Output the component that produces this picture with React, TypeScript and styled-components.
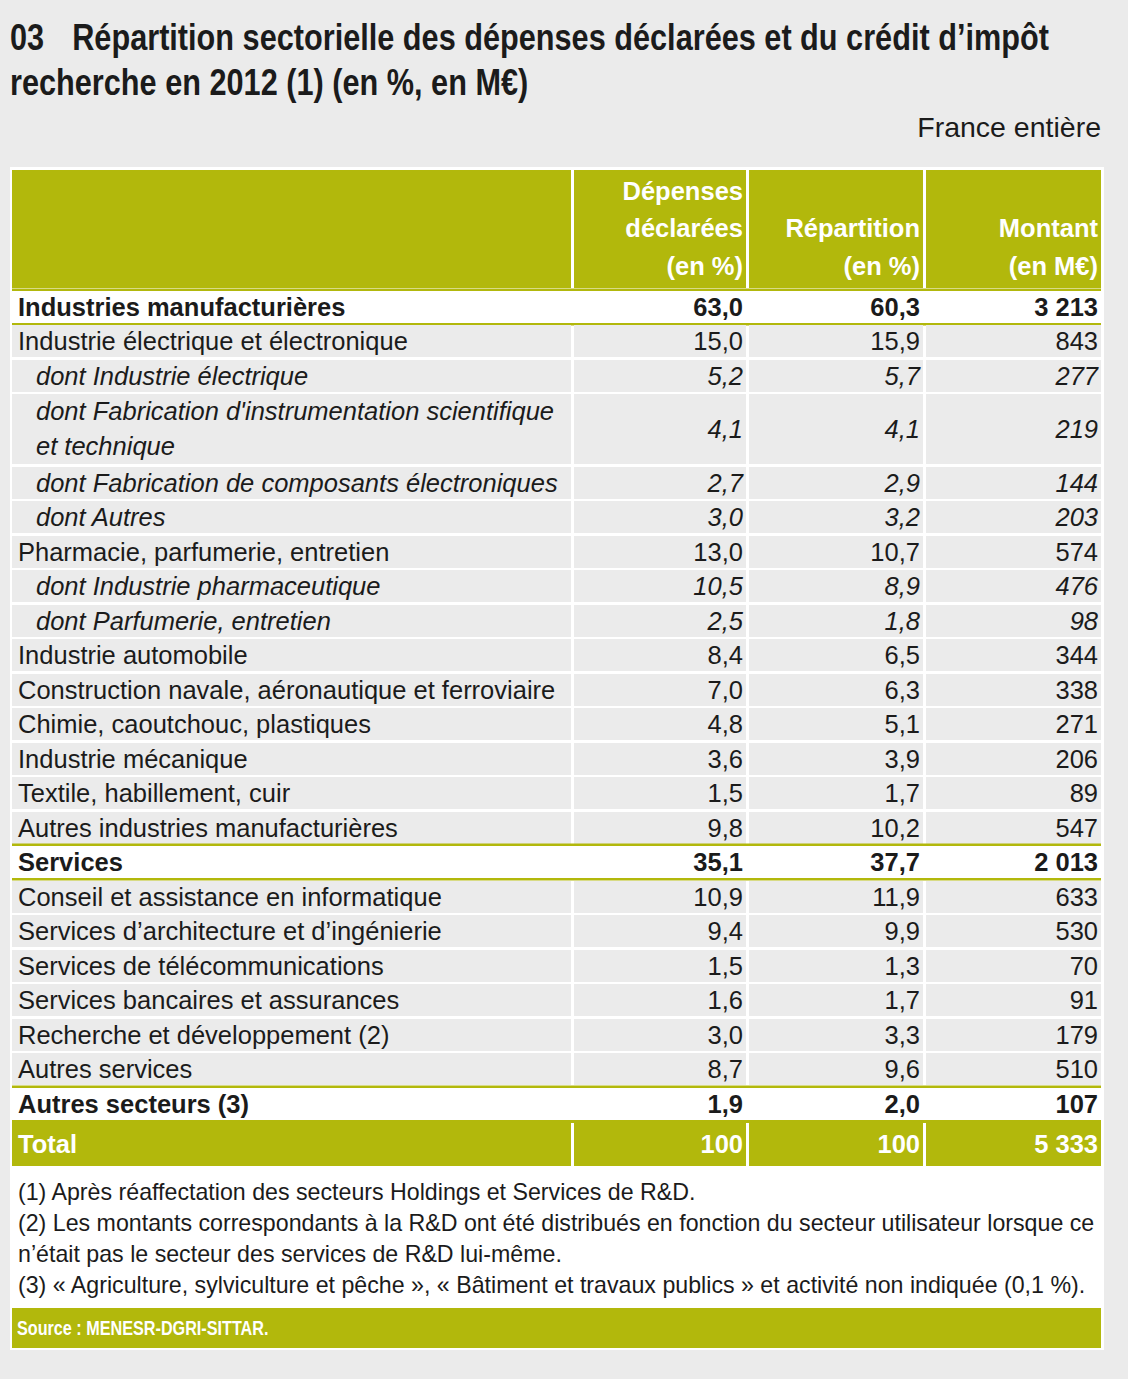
import styled, { createGlobalStyle, css } from "styled-components";

const GREEN = "#b2b80c";
const GREY = "#ebebeb";
const INK = "#1b1b1b";
const FONT = `"Liberation Sans", Arial, sans-serif`;

type Kind = "section" | "item" | "sub" | "total";

interface Line {
  kind: Kind;
  label: string | string[];
  values: [string, string, string];
}

const lines: Line[] = [
  { kind: "section", label: "Industries manufacturières", values: ["63,0", "60,3", "3 213"] },
  { kind: "item", label: "Industrie électrique et électronique", values: ["15,0", "15,9", "843"] },
  { kind: "sub", label: "dont Industrie électrique", values: ["5,2", "5,7", "277"] },
  {
    kind: "sub",
    label: ["dont Fabrication d'instrumentation scientifique", "et technique"],
    values: ["4,1", "4,1", "219"],
  },
  { kind: "sub", label: "dont Fabrication de composants électroniques", values: ["2,7", "2,9", "144"] },
  { kind: "sub", label: "dont Autres", values: ["3,0", "3,2", "203"] },
  { kind: "item", label: "Pharmacie, parfumerie, entretien", values: ["13,0", "10,7", "574"] },
  { kind: "sub", label: "dont Industrie pharmaceutique", values: ["10,5", "8,9", "476"] },
  { kind: "sub", label: "dont Parfumerie, entretien", values: ["2,5", "1,8", "98"] },
  { kind: "item", label: "Industrie automobile", values: ["8,4", "6,5", "344"] },
  { kind: "item", label: "Construction navale, aéronautique et ferroviaire", values: ["7,0", "6,3", "338"] },
  { kind: "item", label: "Chimie, caoutchouc, plastiques", values: ["4,8", "5,1", "271"] },
  { kind: "item", label: "Industrie mécanique", values: ["3,6", "3,9", "206"] },
  { kind: "item", label: "Textile, habillement, cuir", values: ["1,5", "1,7", "89"] },
  { kind: "item", label: "Autres industries manufacturières", values: ["9,8", "10,2", "547"] },
  { kind: "section", label: "Services", values: ["35,1", "37,7", "2 013"] },
  { kind: "item", label: "Conseil et assistance en informatique", values: ["10,9", "11,9", "633"] },
  { kind: "item", label: "Services d’architecture et d’ingénierie", values: ["9,4", "9,9", "530"] },
  { kind: "item", label: "Services de télécommunications", values: ["1,5", "1,3", "70"] },
  { kind: "item", label: "Services bancaires et assurances", values: ["1,6", "1,7", "91"] },
  { kind: "item", label: "Recherche et développement (2)", values: ["3,0", "3,3", "179"] },
  { kind: "item", label: "Autres services", values: ["8,7", "9,6", "510"] },
  { kind: "section", label: "Autres secteurs (3)", values: ["1,9", "2,0", "107"] },
  { kind: "total", label: "Total", values: ["100", "100", "5 333"] },
];

const GlobalStyle = createGlobalStyle`
  html, body {
    margin: 0;
    padding: 0;
    background: ${GREY};
    overflow-x: hidden;
  }
  body {
    font-family: ${FONT};
    color: ${INK};
  }
`;

const Page = styled.div`
  width: 1094px;
  padding: 15px 0 0 10px;
`;

/* the source uses a condensed face: squeeze Liberation Sans to match */
const Title = styled.h1`
  margin: 0;
  width: 1094px;
  height: 90px;
  overflow: hidden;
  font: 700 36px/45px ${FONT};
  white-space: nowrap;
`;

const TitleText = styled.span`
  display: inline-block;
  transform: scaleX(0.852);
  transform-origin: 0 0;
`;

const TitleNum = styled.span`
  display: inline-block;
  width: 73px;
`;

const Scope = styled.div`
  margin-top: 4px;
  padding-right: 3px;
  text-align: right;
  font-size: 28.5px;
  line-height: 36px;
`;

const Panel = styled.div`
  margin-top: 22px;
  background: #fff;
  padding: 3px 3px 2px 2px;
  display: flex;
  flex-direction: column;
`;

const Table = styled.div`
  display: flex;
  flex-direction: column;
  gap: 2.5px;
`;

const Row = styled.div<{ $kind?: Kind | "head"; $tall?: boolean }>`
  display: grid;
  grid-template-columns: 559px 172px 174px 175px;
  column-gap: 3px;
  font-size: 25.5px;
  line-height: 32px;
  min-height: 32px;

  ${(p) =>
    p.$kind === "head" &&
    css`
      height: 118px;
    `}
  ${(p) =>
    p.$kind === "section" &&
    css`
      box-shadow: 0 -2.5px 0 ${GREEN}, 0 2.5px 0 ${GREEN};
      font-weight: 700;
    `}
  ${(p) =>
    p.$kind === "sub" &&
    css`
      font-style: italic;
    `}
  ${(p) =>
    p.$kind === "total" &&
    css`
      height: 43px;
      margin-top: 1px;
      font-weight: 700;
      color: #fff;
      line-height: 43px;
      box-shadow: 0 -2px 0 ${GREEN};
    `}
  ${(p) =>
    p.$tall &&
    css`
      line-height: 35px;
    `}
`;

const Cell = styled.div<{ $kind?: Kind; $num?: boolean }>`
  background: ${(p) =>
    p.$kind === "section" ? "#fff" : p.$kind === "total" ? GREEN : GREY};
  padding: 0 ${(p) => (p.$num ? "3px" : "0")} 0
    ${(p) => (p.$num ? "0" : p.$kind === "sub" ? "24px" : "6px")};
  text-align: ${(p) => (p.$num ? "right" : "left")};
  white-space: nowrap;
  display: flex;
  flex-direction: column;
  justify-content: center;
`;

const HeadCell = styled.div`
  background: ${GREEN};
  color: #fff;
  font-weight: 700;
  line-height: 37.5px;
  text-align: right;
  padding: 0 3px 3px 0;
  display: flex;
  flex-direction: column;
  justify-content: flex-end;
`;

const Notes = styled.div`
  padding: 11px 0 7px 6px;
  font-size: 23.2px;
  line-height: 31px;
  white-space: nowrap;
`;

const Source = styled.div`
  background: ${GREEN};
  color: #fff;
  font-weight: 700;
  font-size: 19.5px;
  line-height: 40px;
  padding-left: 5px;
  white-space: nowrap;
  overflow: hidden;
`;

const SourceText = styled.span`
  display: inline-block;
  transform: scaleX(0.83);
  transform-origin: 0 50%;
`;

export default function App() {
  return (
    <>
      <GlobalStyle />
      <Page>
        <Title>
          <TitleText>
            <TitleNum>03</TitleNum>Répartition sectorielle des dépenses déclarées et du crédit
            d’impôt
            <br />
            recherche en 2012 (1) (en %, en M€)
          </TitleText>
        </Title>
        <Scope>France entière</Scope>
        <Panel>
          <Table>
            <Row $kind="head">
              <HeadCell />
              <HeadCell>
                <span>Dépenses</span>
                <span>déclarées</span>
                <span>(en %)</span>
              </HeadCell>
              <HeadCell>
                <span>Répartition</span>
                <span>(en %)</span>
              </HeadCell>
              <HeadCell>
                <span>Montant</span>
                <span>(en M€)</span>
              </HeadCell>
            </Row>
            {lines.map((line, i) => {
              const tall = Array.isArray(line.label);
              return (
                <Row key={i} $kind={line.kind} $tall={tall}>
                  <Cell $kind={line.kind}>
                    {tall
                      ? (line.label as string[]).map((l) => <span key={l}>{l}</span>)
                      : line.label}
                  </Cell>
                  {line.values.map((v, j) => (
                    <Cell key={j} $kind={line.kind} $num>
                      {v}
                    </Cell>
                  ))}
                </Row>
              );
            })}
          </Table>
          <Notes>
            <div>(1) Après réaffectation des secteurs Holdings et Services de R&amp;D.</div>
            <div>
              (2) Les montants correspondants à la R&amp;D ont été distribués en fonction du secteur
              utilisateur lorsque ce
            </div>
            <div>n’était pas le secteur des services de R&amp;D lui-même.</div>
            <div>
              (3) « Agriculture, sylviculture et pêche », « Bâtiment et travaux publics » et activité
              non indiquée (0,1 %).
            </div>
          </Notes>
          <Source>
            <SourceText>Source : MENESR-DGRI-SITTAR.</SourceText>
          </Source>
        </Panel>
      </Page>
    </>
  );
}
